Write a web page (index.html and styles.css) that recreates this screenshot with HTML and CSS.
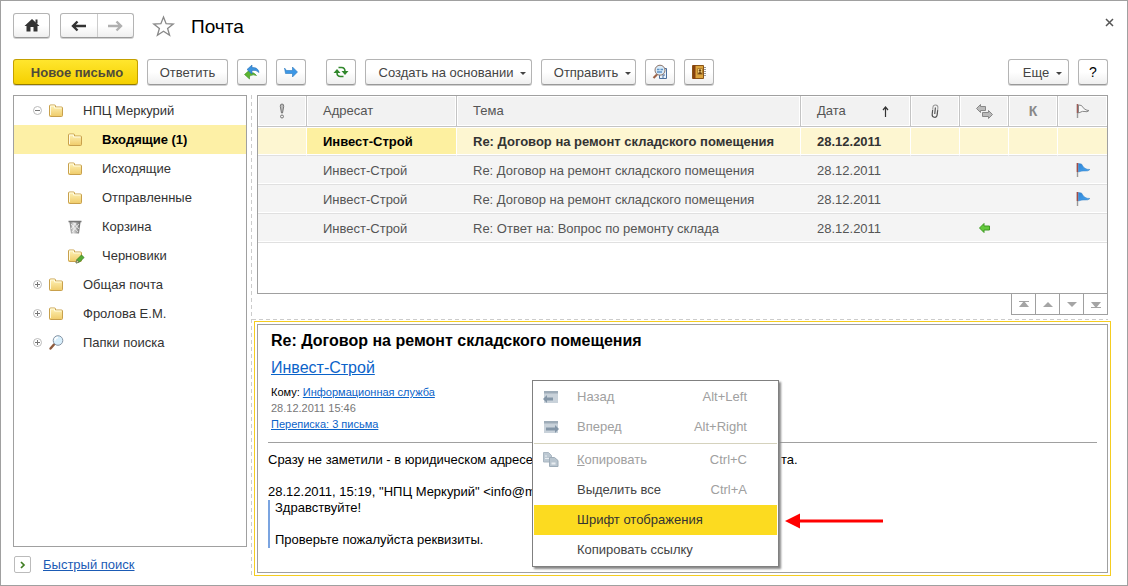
FILE: index.html
```html
<!DOCTYPE html>
<html lang="ru">
<head>
<meta charset="utf-8">
<title>Почта</title>
<link rel="stylesheet" href="styles.css">
</head>
<body>
<svg class="defs" aria-hidden="true">
  <defs>
    <linearGradient id="g-folder" x1="0" y1="0" x2="0" y2="1"><stop offset="0" stop-color="#fff3b8"/><stop offset="1" stop-color="#efcb69"/></linearGradient>
    <linearGradient id="g-trash" x1="0" y1="0" x2="1" y2="0"><stop offset="0" stop-color="#777"/><stop offset=".35" stop-color="#ddd"/><stop offset="1" stop-color="#666"/></linearGradient>
    <linearGradient id="g-flag" x1="0" y1="0" x2="1" y2="1"><stop offset="0" stop-color="#2f86d8"/><stop offset="1" stop-color="#4aa6ef"/></linearGradient>
    <symbol id="folder" viewBox="0 0 16 16"><path d="M1.5 3q0-1 1-1h4q1 0 1 1v1h6q1 0 1 1v7.500q0 1-1 1h-11q-1 0-1-1z" fill="url(#g-folder)" stroke="#c8a04c"/><path d="M2.500 12v-9h4v2h7" fill="none" stroke="#fffbe0"/></symbol>
    <symbol id="expand" viewBox="0 0 9 9"><circle cx="4.500" cy="4.500" r="4" fill="#fff" stroke="#bbb"/><path d="M2 4.500h5M4.500 2v5" stroke="#777"/></symbol>
    <symbol id="collapse" viewBox="0 0 9 9"><circle cx="4.500" cy="4.500" r="4" fill="#fff" stroke="#bbb"/><path d="M2 4.500h5" stroke="#777"/></symbol>
    <symbol id="lens" viewBox="0 0 16 16"><path d="M6 9.500L2.500 13.500" stroke="#8d5a3c" stroke-width="2.400" stroke-linecap="round"/><circle cx="10" cy="5.500" r="4.800" fill="#d8effc" stroke="#8795a5"/><path d="M7 5.500a3 3 0 0 1 3-3" stroke="#fff" stroke-width="1.500" fill="none"/></symbol>
    <symbol id="flag" viewBox="0 0 14 14"><path d="M1.500 0v14" stroke="#999" stroke-width="1.400"/><path d="M1.500 0v9" stroke="#a34a45" stroke-width="1.600"/><path d="M2.500.5L5.500 1Q7 4 9 5.300T14 6.500Q12 8.500 9 8T2.500 9z" fill="url(#g-flag)" stroke="#3a82c4" stroke-width=".5"/></symbol>
  </defs>
</svg>

<div class="window">
  <header class="titlebar">
    <button class="btn home" aria-label="Начальная страница"><svg width="16" height="13" viewBox="0 0 16 13"><path d="M8 0L15.500 7h-2v5.500h-4V8h-3v4.500h-4V7h-2z" fill="#333"/><path d="M11.500.5h2v4h-2z" fill="#333"/></svg></button>
    <div class="history">
      <button aria-label="Назад"><svg width="15" height="12" viewBox="0 0 15 12"><path d="M15 6H3M6.500 1.500L2 6l4.500 4.500" fill="none" stroke="#333" stroke-width="2.400"/></svg></button>
      <button aria-label="Вперед" disabled><svg width="15" height="12" viewBox="0 0 15 12"><path d="M0 6h12M8.500 1.500L13 6l-4.500 4.500" fill="none" stroke="#b0b0b0" stroke-width="2.400"/></svg></button>
    </div>
    <button class="plain star" aria-label="В избранное"><svg width="23" height="22" viewBox="0 0 23 22"><path d="M11.500 2l2.600 6.700 7.200.3-5.700 4.400 2 6.800-6.100-3.900-6.100 3.900 2-6.800L1.700 9l7.200-.3z" fill="#fff" stroke="#888" stroke-width="1.300"/></svg></button>
    <h1>Почта</h1>
    <button class="plain close" aria-label="Закрыть"><svg width="9" height="9" viewBox="0 0 9 9"><path d="M1 1l7 7M8 1L1 8" stroke="#555" stroke-width="1.500"/></svg></button>
  </header>

  <div class="toolbar">
    <button class="btn primary">Новое письмо</button>
    <button class="btn reply">Ответить</button>
    <button class="btn icon" aria-label="Ответить всем"><svg width="16" height="16" viewBox="0 0 16 16"><path d="M.5 10.500L5.500 6v2.500q5-.5 7 3-3-1.500-7 .5V15z" fill="#5cb531" stroke="#3d8f22" stroke-width=".6"/><path d="M3 5.500L8 1v2.500q6-.5 7 5-3-3-7-2V10z" fill="#3b92dd" stroke="#2a72b8" stroke-width=".6"/></svg></button>
    <button class="btn icon" aria-label="Переслать"><svg width="14" height="12" viewBox="0 0 14 12"><path d="M.5 2l2 2.500h6V1l5 5-5 5V7.500h-7z" fill="#3c97e6" stroke="#2b78be" stroke-width=".6"/></svg></button>
    <button class="btn icon refresh" aria-label="Обновить"><svg width="16" height="12" viewBox="0 0 16 12"><path d="M5.500 1.500h3q3.500 0 3.500 4M10.500 10.500h-3q-3.500 0-3.500-4" fill="none" stroke="#31882c" stroke-width="1.600"/><path d="M8.500 5h7L12 9zM.5 7h7L4 3z" fill="#31882c"/></svg></button>
    <button class="btn menu create">Создать на основании<i class="caret"></i></button>
    <button class="btn menu send">Отправить<i class="caret"></i></button>
    <button class="btn icon" aria-label="Найти письма"><svg width="16" height="16" viewBox="0 0 16 16"><path d="M7.500 4.500h7v10h-7z" fill="#e9f3fc" stroke="#4d6f9c"/><path d="M11 14v-3h2" fill="none" stroke="#4d6f9c"/><path d="M5 10.500L1.500 14" stroke="#9b6247" stroke-width="2.200"/><circle cx="8" cy="6.200" r="5" fill="#d9ebf9" stroke="#8c7469"/><path d="M5 5.500h2.500m1 0H11M5 8h5" stroke="#5e93c6" stroke-width="1.500"/></svg></button>
    <button class="btn icon" aria-label="Адресная книга"><svg width="16" height="16" viewBox="0 0 16 16"><path d="M1.500 1.500h11v13h-11z" fill="#dca43d" stroke="#8a5417"/><path d="M2 1h2.500v14H2z" fill="#87420f"/><path d="M6.500 4.500h5v6h-5z" fill="#f3d27e" stroke="#b58230"/><circle cx="9" cy="6.500" r="1.200" fill="#6d4310"/><path d="M7 10q0-2 2-2t2 2z" fill="#6d4310"/><path d="M13 3.500h2M13 5.500h2M13 7.500h2M13 9.500h2M13 11.500h2" stroke="#999"/></svg></button>
    <button class="btn menu more">Еще<i class="caret"></i></button>
    <button class="btn icon help">?</button>
  </div>

  <main class="workspace">
    <aside class="side">
      <nav class="tree" aria-label="Папки">
        <a class="node" href="#"><svg class="toggle"><use href="#collapse"/></svg><svg class="ico"><use href="#folder"/></svg>НПЦ Меркурий</a>
        <a class="node child selected" href="#"><svg class="ico"><use href="#folder"/></svg>Входящие (1)</a>
        <a class="node child" href="#"><svg class="ico"><use href="#folder"/></svg>Исходящие</a>
        <a class="node child" href="#"><svg class="ico"><use href="#folder"/></svg>Отправленные</a>
        <a class="node child" href="#"><svg class="ico" viewBox="0 0 16 16"><path d="M2.500 3h11L12 14.500H4z" fill="url(#g-trash)"/><path d="M4 5l7 8M7 4l5 6M12 5l-7 8M9 4l-5 6" stroke="#fff" stroke-width=".7"/><path d="M1.500 2.500h13" stroke="#777" stroke-width="1.500"/></svg>Корзина</a>
        <a class="node child" href="#"><svg class="ico wide" viewBox="0 0 18 16"><use href="#folder" width="16" height="16"/><path d="M9 15l1-3.500 4.500-4.500 2.600 2.500-4.600 4.600z" fill="#55ad35" stroke="#397f25" stroke-width=".8"/><path d="M9 15l.8-3 2.200 2.200z" fill="#f2d9a9" stroke="#555" stroke-width=".5"/></svg>Черновики</a>
        <a class="node" href="#"><svg class="toggle"><use href="#expand"/></svg><svg class="ico"><use href="#folder"/></svg>Общая почта</a>
        <a class="node" href="#"><svg class="toggle"><use href="#expand"/></svg><svg class="ico"><use href="#folder"/></svg>Фролова Е.М.</a>
        <a class="node" href="#"><svg class="toggle"><use href="#expand"/></svg><svg class="ico"><use href="#lens"/></svg>Папки поиска</a>
      </nav>
      <div class="quick">
        <button aria-label="Развернуть быстрый поиск"><svg width="6" height="8" viewBox="0 0 6 8"><path d="M1 1l3 3-3 3" fill="none" stroke="#3f7d22" stroke-width="1.700"/></svg></button>
        <a href="#">Быстрый поиск</a>
      </div>
    </aside>

    <div class="vsplit"></div>

    <section class="content">
      <div class="list">
        <table>
          <colgroup><col class="c-s"><col class="c-from"><col><col class="c-date"><col class="c-s"><col class="c-s"><col class="c-s"><col class="c-s"></colgroup>
          <thead>
            <tr>
              <th class="mid" aria-label="Важность"><svg width="8" height="16" viewBox="0 0 8 16"><path d="M4 1q2 0 1.700 2.500L4.500 10h-1L2.300 3.500Q2 1 4 1z" fill="#bbb" stroke="#777"/><circle cx="4" cy="13.500" r="1.500" fill="#eee" stroke="#777"/></svg></th>
              <th>Адресат</th>
              <th>Тема</th>
              <th><span class="sort">Дата<svg width="7" height="11" viewBox="0 0 7 11"><path d="M3.500 11V1M1 4l2.500-3L6 4" fill="none" stroke="#333" stroke-width="1.200"/></svg></span></th>
              <th class="mid" aria-label="Вложения"><svg class="clip" width="8" height="15" viewBox="0 0 8 15"><path d="M1.500 5.500V3.500Q1.500 1 4 1t2.500 2.500V10" fill="none" stroke="#999"/><path d="M6.500 6v4.500q0 2.800-2.500 2.800t-2.500-2.800V6M4 3.500v6.500" fill="none" stroke="#555" stroke-width="1.200"/></svg></th>
              <th class="mid" aria-label="Ответ"><svg width="17" height="15" viewBox="0 0 17 15"><path d="M.5 4.500l4-4v2h5v4h-5v2z" fill="#bbb" stroke="#888"/><path d="M16.500 10.500l-4-4v2h-6v4h6v2z" fill="#bbb" stroke="#888"/></svg></th>
              <th class="mid kind">К</th>
              <th class="mid" aria-label="Флаг"><svg width="14" height="14" viewBox="0 0 14 14"><path d="M1.500 0v14" stroke="#999" stroke-width="1.400"/><path d="M1.500 0v9" stroke="#a05a55" stroke-width="1.400"/><path d="M2.500 1L5.500 1.500Q7 4 9 5.300T13 6.500Q11 8.500 9 7.500T2.500 9z" fill="#f8f8f8" stroke="#888"/></svg></th>
            </tr>
          </thead>
          <tbody>
            <tr class="current"><td></td><td class="cell">Инвест-Строй</td><td>Re: Договор на ремонт складского помещения</td><td>28.12.2011</td><td></td><td></td><td></td><td></td></tr>
            <tr><td></td><td>Инвест-Строй</td><td>Re: Договор на ремонт складского помещения</td><td>28.12.2011</td><td></td><td></td><td></td><td class="mid"><svg width="14" height="14"><use href="#flag"/></svg></td></tr>
            <tr><td></td><td>Инвест-Строй</td><td>Re: Договор на ремонт складского помещения</td><td>28.12.2011</td><td></td><td></td><td></td><td class="mid"><svg width="14" height="14"><use href="#flag"/></svg></td></tr>
            <tr><td></td><td>Инвест-Строй</td><td>Re: Ответ на: Вопрос по ремонту склада</td><td>28.12.2011</td><td></td><td class="mid"><svg width="11" height="10" viewBox="0 0 11 10"><path d="M.5 5l4.500-4.500v2.500h5.500v4H5v2.500z" fill="#63c93c" stroke="#3f9a22"/></svg></td><td></td><td></td></tr>
          </tbody>
        </table>
      </div>
      <div class="pager">
        <button aria-label="В начало"><svg width="10" height="7" viewBox="0 0 10 7"><path d="M0 .5h10" stroke="#a5a5a5"/><path d="M5 0l5 6H0z" fill="#a5a5a5"/></svg></button>
        <button aria-label="Вверх"><svg width="10" height="7" viewBox="0 0 10 7"><path d="M5 1l5 5H0z" fill="#a5a5a5"/></svg></button>
        <button aria-label="Вниз"><svg width="10" height="7" viewBox="0 0 10 7"><path d="M5 6L0 1h10z" fill="#a5a5a5"/></svg></button>
        <button aria-label="В конец"><svg width="10" height="7" viewBox="0 0 10 7"><path d="M0 6.500h10" stroke="#a5a5a5"/><path d="M5 7L0 1h10z" fill="#a5a5a5"/></svg></button>
      </div>
      <div class="hsplit"></div>
      <div class="focus">
        <article class="letter">
          <div class="head">
            <h2>Re: Договор на ремонт складского помещения</h2>
            <a class="sender" href="#">Инвест-Строй</a>
            <p>Кому: <a href="#">Информационная служба</a></p>
            <p class="stamp">28.12.2011 15:46</p>
            <p><a href="#">Переписка: 3 письма</a></p>
          </div>
          <hr>
          <p>Сразу не заметили - в юридическом адресе<span class="tail">та.</span></p>
          <p class="quote-from">28.12.2011, 15:19, "НПЦ Меркурий" &lt;info@m</p>
          <blockquote>Здравствуйте!<br><br>Проверьте пожалуйста реквизиты.</blockquote>
        </article>
        <div class="popup" role="menu">
          <button role="menuitem" disabled><svg width="16" height="16" viewBox="0 0 16 16"><path d="M1 2h14v12H1z" fill="#c9d2da"/><path d="M1 2h14v2.500H1z" fill="#9eacb8"/><path d="M0 10l4-4v2.500h6v3H4V14z" fill="#8496a7"/></svg><span>Назад</span><kbd>Alt+Left</kbd></button>
          <button role="menuitem" disabled><svg width="16" height="16" viewBox="0 0 16 16"><path d="M1 2h14v12H1z" fill="#c9d2da"/><path d="M1 2h14v2.500H1z" fill="#9eacb8"/><path d="M16 10l-4-4v2.500H3v3h9V14z" fill="#8496a7"/></svg><span>Вперед</span><kbd>Alt+Right</kbd></button>
          <div class="rule"></div>
          <button role="menuitem" disabled><svg width="16" height="16" viewBox="0 0 16 16"><path d="M.5.500h5l3 3v6.500h-8z" fill="#bcc8d2" stroke="#aab7c2"/><path d="M2 4h2m-2 2.500h4" stroke="#e8edf1"/><path d="M6.500 5.500h5l3.500 3v6h-8.500z" fill="#b9c5cf" stroke="#9eacb8"/><path d="M8.500 10.500h4v2h-4z" fill="#e8edf1"/></svg><span><u>К</u>опировать</span><kbd>Ctrl+C</kbd></button>
          <button role="menuitem"><span>Вы<u>д</u>елить все</span><kbd>Ctrl+A</kbd></button>
          <button role="menuitem" class="active"><span>Шрифт отображения</span></button>
          <button role="menuitem"><span>Копировать ссылку</span></button>
        </div>
        <svg class="pointer" width="98" height="16" viewBox="0 0 98 16"><path d="M10 8h88" stroke="#f00" stroke-width="3"/><path d="M0 8L15 .5v15z" fill="#f00"/></svg>
      </div>
    </section>
  </main>
</div>
</body>
</html>
```

FILE: styles.css
```css
* { box-sizing: border-box; }
body {
  margin: 0;
  background: #fff;
  color: #333;
  font: 13px/16px "Liberation Sans", Arial, sans-serif;
}
button { font: inherit; color: inherit; margin: 0; padding: 0; cursor: pointer; }
svg { flex: none; display: block; }
h1, h2, p, blockquote { margin: 0; }
a { color: #0b63c9; }
.defs { position: absolute; width: 0; height: 0; }

.window {
  display: flex;
  flex-direction: column;
  min-height: 100vh;
  padding: 12px 19px 9px 12px;
  border: 1px solid #a0a0a0;
}

/* title row */
.titlebar { display: flex; align-items: center; height: 25px; }
.btn, .history {
  display: flex;
  align-items: center;
  justify-content: center;
  border: 1px solid #b4b4b4;
  border-bottom-color: #999;
  border-radius: 3px;
  background: linear-gradient(#fff 50%, #efefef);
  box-shadow: 0 1px 0 #d0d0d0;
}
.home { width: 37px; height: 25px; }
.history { margin-left: 10px; height: 25px; width: 74px; }
.history button {
  display: flex;
  flex: 1;
  height: 100%;
  align-items: center;
  justify-content: center;
  border: 0;
  background: none;
}
.history button + button { border-left: 1px solid #ccc; }
.plain { border: 0; background: none; }
.star { margin-left: 18px; }
h1 { margin-left: 16px; padding-top: 2px; font: 19px/24px "Liberation Sans", Arial, sans-serif; color: #000; }
.close { margin: 0 -7px 6px auto; padding: 1px; }

/* command bar */
.toolbar { display: flex; gap: 9px; margin-top: 21px; }
.toolbar .btn { height: 26px; padding-top: 1px; color: #444; }
.toolbar .primary {
  width: 125px;
  padding-left: 3px;
  border-color: #c4a000;
  border-bottom-color: #937a00;
  background: linear-gradient(#ffe62e, #f5d000);
  color: #4f4a3a;
  font-weight: bold;
}
.toolbar .reply { width: 81px; }
.toolbar .icon { width: 30px; padding-top: 0; }
.toolbar .refresh { margin-left: 11px; }
.toolbar .create { width: 167px; }
.toolbar .send { width: 95px; }
.toolbar .menu { gap: 7px; padding-left: 8px; }
.toolbar .more { width: 61px; margin-left: auto; }
.toolbar .help { color: #000; font-size: 14px; }
.caret { border: 3px solid transparent; border-top-color: #444; border-bottom: 0; margin-top: 1px; }

/* folders */
.workspace {
  display: grid;
  flex: 1;
  grid-template-columns: 234px 10px minmax(0, 1fr);
  margin-top: 10px;
}
.side { display: flex; flex-direction: column; }
.tree { flex: 1; border: 1px solid #a0a0a0; }
.node {
  display: flex;
  align-items: center;
  height: 29px;
  padding-left: 19px;
  color: #333;
  text-decoration: none;
}
.node.child { padding-left: 53px; }
.selected { background: #fdf0a6; color: #000; font-weight: bold; }
.toggle { width: 9px; height: 9px; margin-right: 6px; }
.ico { width: 16px; height: 16px; margin-right: 19px; }
.ico.wide { width: 18px; margin-right: 17px; }
.quick { display: flex; align-items: center; gap: 12px; height: 29px; padding: 6px 0 0 1px; }
.quick button {
  display: flex;
  width: 17px;
  height: 17px;
  align-items: center;
  justify-content: center;
  border: 1px solid #bbb;
  border-radius: 2px;
  background: #fff;
}
.quick a { color: #1b5bb5; }

.vsplit {
  width: 1px;
  margin-left: 4px;
  background: repeating-linear-gradient(#ccc 0 4px, transparent 4px 7px);
}

/* message list */
.content { display: flex; flex-direction: column; min-width: 0; }
.list { height: 199px; border: 1px solid #a0a0a0; overflow: hidden; }
table { width: 100%; table-layout: fixed; border-spacing: 0; }
.c-s { width: 49px; }
.c-from { width: 150px; }
.c-date { width: 110px; }
th, td { padding: 0 0 0 16px; text-align: left; white-space: nowrap; }
th {
  height: 31px;
  border-right: 1px solid #c4c4c4;
  border-bottom: 1px solid #c4c4c4;
  background: #f2f2f2;
  box-shadow: inset 0 0 0 1px #fff;
  color: #555;
  font-weight: normal;
}
th:last-child { border-right: 0; }
td {
  height: 29px;
  padding-top: 1px;
  border-bottom: 1px solid #e0e0e0;
  background: #f4f4f4;
  box-shadow: inset 0 -1px 0 #fff;
  color: #555;
}
.mid { padding: 0; text-align: center; }
.mid svg { display: block; margin: 0 auto; }
.mid .clip { transform: rotate(6deg); }
.kind { color: #888; font-size: 14px; font-weight: bold; }
.sort { display: flex; align-items: center; justify-content: space-between; padding-right: 21px; }
.current td {
  border-right: 1px solid #fff;
  background: #fdf6d1;
  box-shadow: inset 0 1px 0 #fff, inset 0 -1px 0 #fff;
  color: #333;
  font-weight: bold;
}
.current td:last-child { border-right: 0; }
.current .cell { background: #fdf0a0; color: #000; }

.pager {
  display: flex;
  align-self: flex-end;
  height: 22px;
  margin-top: -1px;
  border: 1px solid #a0a0a0;
}
.pager button {
  display: flex;
  width: 24px;
  align-items: center;
  justify-content: center;
  border: 0;
  border-right: 1px solid #a0a0a0;
  background: #fff;
}
.pager button:last-child { width: 23px; border: 0; }
.hsplit {
  height: 1px;
  margin: 4px 0 1px -5px;
  background: repeating-linear-gradient(90deg, #ccc 0 4px, transparent 4px 7px);
}

/* message preview */
.focus {
  position: relative;
  display: flex;
  flex: 1;
  margin: 0 -3px;
  padding: 2px;
  border: 1px solid #f5cd20;
}
.letter { flex: 1; padding: 6px 10px 0; border: 1px solid #a0a0a0; color: #000; }
.head { padding-left: 3px; font-size: 11px; }
h2 { font-size: 16px; line-height: 20px; }
.sender { display: block; margin: 7px 0 6px; font-size: 16px; line-height: 20px; }
.stamp { color: #777; }
hr { height: 1px; margin: 10px 0 9px; border: 0; background: #a0a0a0; }
.tail { margin-left: 248px; }
.quote-from { margin-top: 16px; }
blockquote { padding-left: 5px; border-left: 2px solid #7ba4e0; }

.popup {
  position: absolute;
  top: 58px;
  left: 277px;
  width: 247px;
  padding: 1px;
  border: 1px solid #808080;
  background: #fff;
  box-shadow: 2px 2px 2px #888;
}
.popup button {
  position: relative;
  display: flex;
  align-items: center;
  width: 100%;
  height: 30px;
  padding: 0 30px 0 43px;
  border: 0;
  background: none;
  color: #444;
}
.popup button:disabled { color: #a0a0a0; }
.popup svg { margin: 0 18px 0 -34px; }
.popup kbd { margin-left: auto; font: inherit; color: #a0a0a0; }
.popup .active { background: #fcdb20; color: #333; }
.rule { height: 1px; margin: 1px 0; background: #d5d2bd; }
.pointer { position: absolute; top: 191px; left: 530px; }
```
